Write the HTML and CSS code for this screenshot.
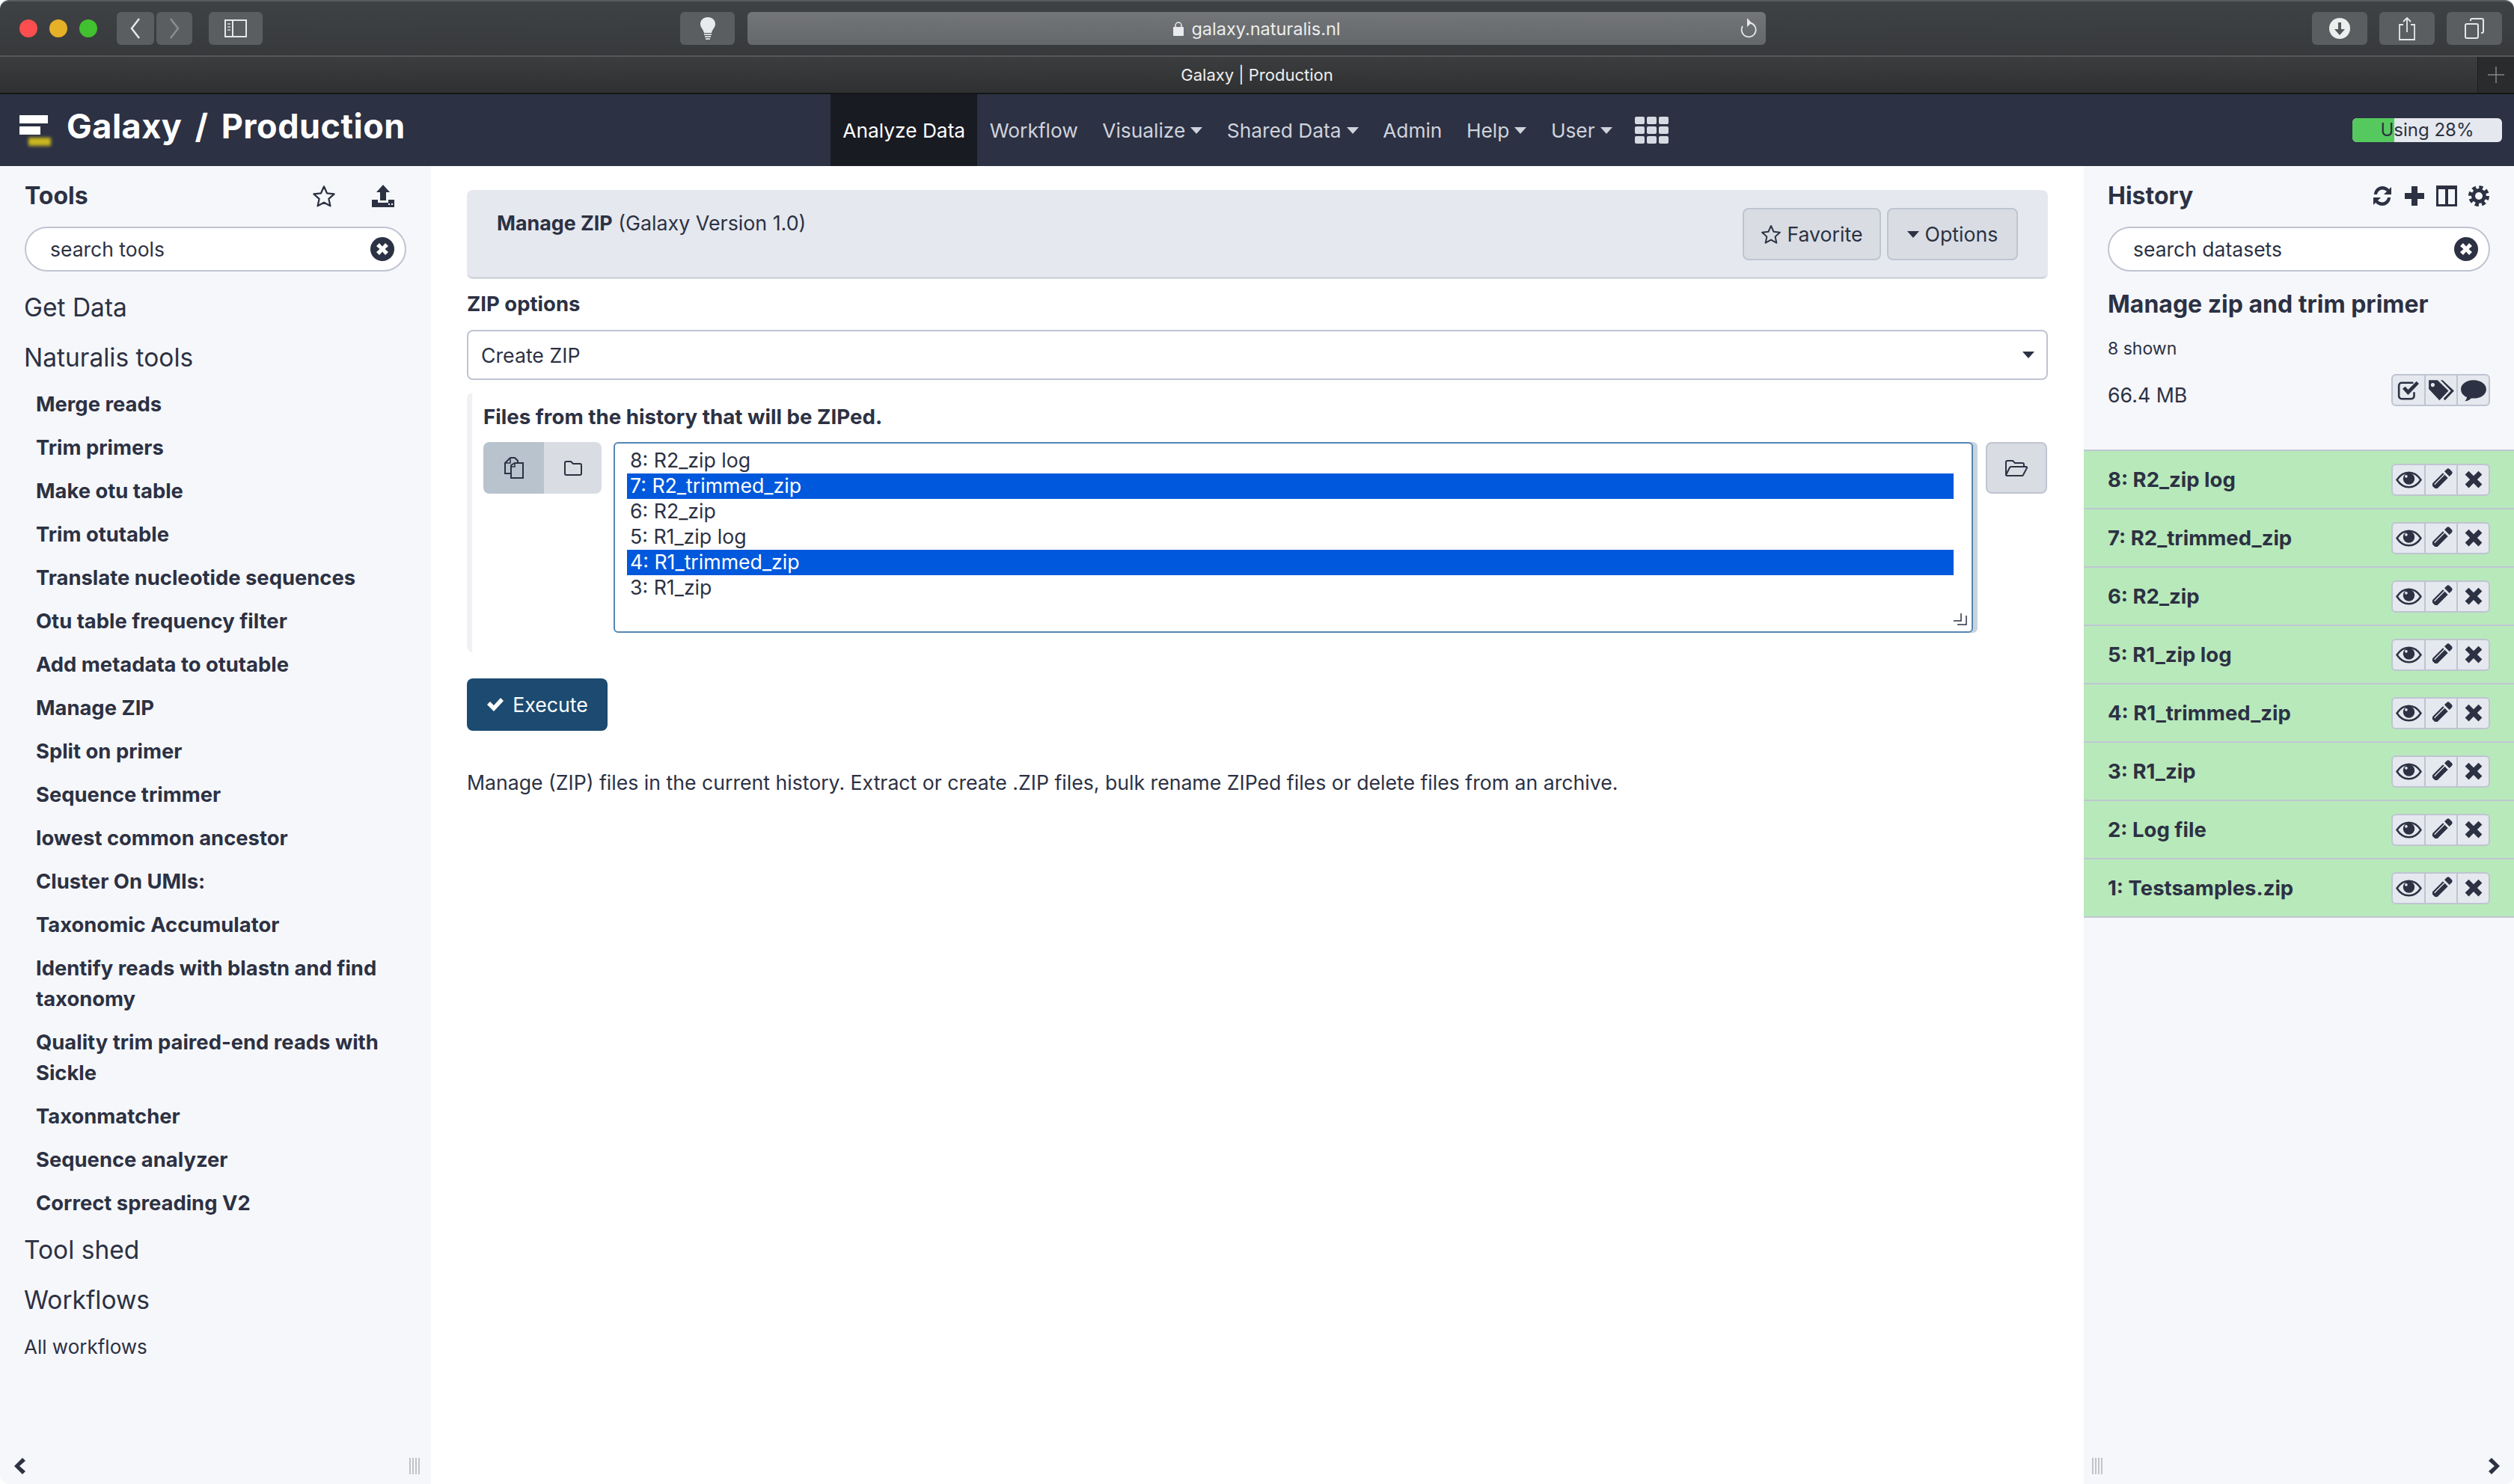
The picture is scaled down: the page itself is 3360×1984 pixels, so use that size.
FILE: index.html
```html
<!DOCTYPE html>
<html lang="en">
<head>
    <meta charset="UTF-8">
    <title>Galaxy | Production</title>
    <link rel="stylesheet" href="styles.css">
</head>
<body>
<svg class="sprite" xmlns="http://www.w3.org/2000/svg">
    <symbol id="i-eye" viewBox="0 0 34 24"><path d="M1.500 12C6 5 11 2.500 17 2.500S28 5 32.500 12C28 19 23 21.500 17 21.500S6 19 1.500 12z" fill="none" stroke="currentColor" stroke-width="2.400"/><circle cx="17" cy="10.500" r="7.500" fill="currentColor"/><circle cx="13.500" cy="7.500" r="1.800" fill="#e5e8ee"/></symbol>
    <symbol id="i-pencil" viewBox="0 0 24 24"><path d="M17.500 1.500a2 2 0 0 1 2.500 0l2.500 2.500a2 2 0 0 1 0 2.500L20 9l-5-5zM13.500 5.500l5 5L8 21H3v-5z" fill="currentColor"/><path d="M5 17l10-10" stroke="#e5e8ee" stroke-width="1"/><path d="M3 18.500L5.500 21H3z" fill="#e5e8ee"/></symbol>
    <symbol id="i-times" viewBox="0 0 24 24"><path d="M6 1.500l6 6 6-6 4.500 4.500-6 6 6 6-4.500 4.500-6-6-6 6L1.500 18l6-6-6-6z" fill="currentColor"/></symbol>
    <symbol id="i-check-square" viewBox="0 0 28 26"><path d="M21 15v5a3.500 3.500 0 0 1-3.500 3.500h-12A3.500 3.500 0 0 1 2 20V7a3.500 3.500 0 0 1 3.500-3.500H20" fill="none" stroke="currentColor" stroke-width="2.400"/><path d="M6.500 11l3.500-3 3.500 4L24 1.500l3 3L13.500 18.500z" fill="currentColor"/></symbol>
    <symbol id="i-tags" viewBox="0 0 36 28"><path d="M2 1h11l14 13.500-11.500 12L2 12zM7 4.500a2.500 2.500 0 1 0 .01 0z" fill="currentColor" fill-rule="evenodd"/><path d="M17 1h2.500L34 14.500 22.500 26.500l-2-2 9.500-10z" fill="currentColor"/></symbol>
    <symbol id="i-comment" viewBox="0 0 34 28"><path d="M17 1c9 0 16 5 16 11.500S26 24 17 24h-3c-2 2-5 3.500-8 3.500 1.500-1.500 2.500-3.500 2.500-5C4 20.500 1 17 1 12.500 1 6 8 1 17 1z" fill="currentColor"/></symbol>
    <symbol id="i-clear" viewBox="0 0 32 32"><circle cx="16" cy="16" r="16" fill="currentColor"/><path d="M12 8l4 4.500L20 8l4 4-4.500 4 4.500 4-4 4-4-4.500L12 24l-4-4 4.500-4L8 12z" fill="#fff"/></symbol>
    <symbol id="i-star" viewBox="0 0 24 24"><path d="M12 2.500l3 6.700 7.200.8-5.400 4.900 1.500 7.100L12 18.500l-6.300 3.500 1.500-7.100L1.800 10 9 9.200z" fill="none" stroke="currentColor" stroke-width="1.700" stroke-linejoin="round"/></symbol>
    <symbol id="i-caret" viewBox="0 0 16 9"><path d="M0 0h16L8 9z" fill="currentColor"/></symbol>
</svg>

<div class="window-bar">
    <div class="dots">
        <span class="dot dot-red"></span><span class="dot dot-yellow"></span><span class="dot dot-green"></span>
    </div>
    <div class="bar-btn bar-back">
        <svg width="20" height="32" viewBox="0 0 20 32"><path d="M15 3L5 16l10 13" fill="none" stroke="#e6e7e8" stroke-width="2.500"/></svg>
    </div>
    <div class="bar-btn bar-forward">
        <svg width="20" height="32" viewBox="0 0 20 32"><path d="M5 3l10 13L5 29" fill="none" stroke="#8b8d8f" stroke-width="2.500"/></svg>
    </div>
    <div class="bar-btn bar-sidebar">
        <svg width="30" height="24" viewBox="0 0 30 24"><rect x="1" y="1" width="28" height="22" fill="none" stroke="#e6e7e8" stroke-width="2"/><path d="M11 1v22" stroke="#e6e7e8" stroke-width="2"/><path d="M4 6h4M4 10h4M4 14h4" stroke="#b5b7b8" stroke-width="2"/></svg>
    </div>
    <div class="bar-btn bar-bulb">
        <svg width="24" height="32" viewBox="0 0 24 32"><path d="M12 1C6 1 2 5 2 10c0 5 4 7 5 12h10c1-5 5-7 5-12 0-5-4-9-10-9z" fill="#e8eaeb"/><path d="M7 24h10M8 27h8M9 30h6" stroke="#d2d4d5" stroke-width="2"/></svg>
    </div>
    <div class="url-bar">
        <svg class="lock" width="16" height="20" viewBox="0 0 16 20"><path d="M4 9V6a4 4 0 0 1 8 0v3" fill="none" stroke="#e8eaeb" stroke-width="1.500"/><rect x="1" y="8" width="14" height="12" rx="1" fill="#e8eaeb"/></svg>
        <span>galaxy.naturalis.nl</span>
        <svg class="reload" width="24" height="30" viewBox="0 0 24 30"><path d="M15 7.500A9.500 9.500 0 1 1 5 12" fill="none" stroke="#e6e7e8" stroke-width="1.800"/><path d="M11 1l6 6.500-6 5.500z" fill="#e6e7e8"/></svg>
    </div>
    <div class="bar-btn bar-download">
        <svg width="28" height="28" viewBox="0 0 28 28"><circle cx="14" cy="14" r="14" fill="#eceded"/><path d="M12 6h4v9h5l-7 8-7-8h5z" fill="#55585a"/></svg>
    </div>
    <div class="bar-btn bar-share">
        <svg width="24" height="32" viewBox="0 0 24 32"><path d="M7 11H2v20h20V11h-5" fill="none" stroke="#e6e7e8" stroke-width="1.800"/><path d="M12 21V2M7 7l5-5 5 5" fill="none" stroke="#e6e7e8" stroke-width="1.800"/></svg>
    </div>
    <div class="bar-btn bar-tabs">
        <svg width="26" height="28" viewBox="0 0 26 28"><rect x="1" y="8" width="17" height="19" rx="2" fill="none" stroke="#e6e7e8" stroke-width="2"/><path d="M8 4V3a2 2 0 0 1 2-2h13a2 2 0 0 1 2 2v15a2 2 0 0 1-2 2h-1" fill="none" stroke="#e6e7e8" stroke-width="2"/></svg>
    </div>
</div>

<div class="tab-bar">
    <div class="tab-title">Galaxy | Production</div>
    <div class="tab-new">
        <svg width="22" height="22" viewBox="0 0 22 22"><path d="M11 0v22M0 11h22" stroke="#85878a" stroke-width="1.500"/></svg>
    </div>
</div>

<header class="masthead">
    <div class="brand">
        <div class="logo">
            <span class="logo-bar logo-long"></span>
            <span class="logo-bar logo-short"></span>
            <span class="logo-bar logo-yellow"></span>
        </div>
        <span class="brand-text">Galaxy / Production</span>
    </div>
    <nav class="top-nav">
        <a class="nav-item active">Analyze Data</a>
        <a class="nav-item">Workflow</a>
        <a class="nav-item">Visualize<svg class="nav-caret"><use href="#i-caret"/></svg></a>
        <a class="nav-item">Shared Data<svg class="nav-caret"><use href="#i-caret"/></svg></a>
        <a class="nav-item">Admin</a>
        <a class="nav-item">Help<svg class="nav-caret"><use href="#i-caret"/></svg></a>
        <a class="nav-item">User<svg class="nav-caret"><use href="#i-caret"/></svg></a>
        <div class="nav-grid">
            <span></span><span></span><span></span><span></span><span></span><span></span><span></span><span></span><span></span>
        </div>
    </nav>
    <div class="quota">
        <div class="quota-fill"></div>
        <span class="quota-text">Using 28%</span>
    </div>
</header>

<div class="layout">
    <!-- Tools panel -->
    <aside class="panel panel-left">
        <div class="panel-head">
            <h2 class="panel-title">Tools</h2>
            <div class="panel-icons tools-icons">
                <svg class="head-icon star-icon"><use href="#i-star"/></svg>
                <svg class="head-icon" viewBox="0 0 30 30"><path d="M15 0l9 10h-5v11h-8V10H6zM0 20h8v4h14v-4h8v10H0z" fill="currentColor"/><path d="M22 26h2M26 26h2" stroke="#f6f7fa" stroke-width="2"/></svg>
            </div>
        </div>
        <div class="search-box">
            <span>search tools</span>
            <svg class="search-clear"><use href="#i-clear"/></svg>
        </div>
        <div class="tool-list">
            <div class="tool-section">Get Data</div>
            <div class="tool-section">Naturalis tools</div>
            <div class="tool-item">Merge reads</div>
            <div class="tool-item">Trim primers</div>
            <div class="tool-item">Make otu table</div>
            <div class="tool-item">Trim otutable</div>
            <div class="tool-item">Translate nucleotide sequences</div>
            <div class="tool-item">Otu table frequency filter</div>
            <div class="tool-item">Add metadata to otutable</div>
            <div class="tool-item">Manage ZIP</div>
            <div class="tool-item">Split on primer</div>
            <div class="tool-item">Sequence trimmer</div>
            <div class="tool-item">lowest common ancestor</div>
            <div class="tool-item">Cluster On UMIs:</div>
            <div class="tool-item">Taxonomic Accumulator</div>
            <div class="tool-item">Identify reads with blastn and find taxonomy</div>
            <div class="tool-item">Quality trim paired-end reads with Sickle</div>
            <div class="tool-item">Taxonmatcher</div>
            <div class="tool-item">Sequence analyzer</div>
            <div class="tool-item">Correct spreading V2</div>
            <div class="tool-section">Tool shed</div>
            <div class="tool-section">Workflows</div>
            <div class="tool-link">All workflows</div>
        </div>
        <div class="panel-foot foot-left">
            <svg class="foot-chevron" viewBox="0 0 18 24"><path d="M13 1l4 4-8 7 8 7-4 4L2 12z" fill="currentColor"/></svg>
            <div class="drag-handle"></div>
        </div>
    </aside>

    <!-- Tool form -->
    <main class="center">
        <div class="tool-header">
            <div class="tool-name"><b>Manage ZIP</b> (Galaxy Version 1.0)</div>
            <div class="tool-actions">
                <button class="btn btn-fav"><svg class="btn-star"><use href="#i-star"/></svg>Favorite</button>
                <button class="btn btn-options"><svg class="btn-caret"><use href="#i-caret"/></svg>Options</button>
            </div>
        </div>

        <label class="field-label">ZIP options</label>
        <div class="select-box">
            <span>Create ZIP</span>
            <svg class="select-caret"><use href="#i-caret"/></svg>
        </div>

        <section class="form-section">
            <label class="field-label section-label">Files from the history that will be ZIPed.</label>
            <div class="file-picker">
                <div class="toggle-group">
                    <div class="toggle toggle-on">
                        <svg width="28" height="30" viewBox="0 0 28 30"><path d="M9 1h6l4 4v4M9 1L2 8v14h8" fill="none" stroke="#2c3143" stroke-width="2"/><path d="M10 22V11l5-3h11v20H10z" fill="none" stroke="#2c3143" stroke-width="2"/><path d="M9 1v7H2M15 8v5h-5" fill="none" stroke="#2c3143" stroke-width="1.500"/></svg>
                    </div>
                    <div class="toggle">
                        <svg width="26" height="24" viewBox="0 0 26 24"><path d="M2 5a2 2 0 0 1 2-2h6l3 3h9a2 2 0 0 1 2 2v11a2 2 0 0 1-2 2H4a2 2 0 0 1-2-2z" fill="none" stroke="#2c3143" stroke-width="2"/></svg>
                    </div>
                </div>
                <div class="listbox">
                    <div class="list-option">8: R2_zip log</div>
                    <div class="list-option selected">7: R2_trimmed_zip</div>
                    <div class="list-option">6: R2_zip</div>
                    <div class="list-option">5: R1_zip log</div>
                    <div class="list-option selected">4: R1_trimmed_zip</div>
                    <div class="list-option">3: R1_zip</div>
                    <svg class="grip" width="18" height="16" viewBox="0 0 18 16"><path d="M0 10h10V0M5 15h12V3" fill="none" stroke="#2c3143" stroke-width="1.500"/></svg>
                </div>
                <div class="browse-btn">
                    <svg width="32" height="24" viewBox="0 0 32 24"><path d="M2 20V4a2 2 0 0 1 2-2h7l3 3h10a2 2 0 0 1 2 2v3M2 21l5-10a2 2 0 0 1 2-1h20a1 1 0 0 1 1 1.500L25 21a2 2 0 0 1-2 1H3z" fill="none" stroke="#2c3143" stroke-width="2"/></svg>
                </div>
            </div>
        </section>

        <button class="btn-execute">
            <svg width="24" height="20" viewBox="0 0 24 20"><path d="M1 10l4-4 5 5L19 1l4 4L10 19z" fill="#fff"/></svg>Execute
        </button>
        <p class="help-text">Manage (ZIP) files in the current history. Extract or create .ZIP files, bulk rename ZIPed files or delete files from an archive.</p>
    </main>

    <!-- History panel -->
    <aside class="panel panel-right">
        <div class="history-top">
            <div class="panel-head">
                <h2 class="panel-title">History</h2>
                <div class="panel-icons history-icons">
                    <svg class="head-icon" viewBox="0 0 28 30"><path d="M3 13C3 7 8 2 14 2c4 0 7 2 9 4l3-3v10H16l4-4c-1.500-1.500-3.500-2.500-6-2.500-3.500 0-6.500 3-7 6.500zM25 17c0 6-5 11-11 11-4 0-7-2-9-4l-3 3V17h10l-4 4c1.500 1.500 3.500 2.500 6 2.500 3.500 0 6.500-3 7-6.500z" fill="currentColor"/></svg>
                    <svg class="head-icon" viewBox="0 0 28 30"><path d="M10 2h8v9h9v8h-9v9h-8v-9H1v-8h9z" fill="currentColor"/></svg>
                    <svg class="head-icon" viewBox="0 0 30 30"><path d="M1 1h28v28H1zM4 6v20h9V6zM17 6v20h9V6z" fill="currentColor" fill-rule="evenodd"/></svg>
                    <svg class="head-icon" viewBox="0 0 28 30"><circle cx="14" cy="15" r="7.500" fill="none" stroke="currentColor" stroke-width="5"/><circle cx="14" cy="15" r="11.500" fill="none" stroke="currentColor" stroke-width="5" stroke-dasharray="5 4.030"/></svg>
                </div>
            </div>
            <div class="search-box">
                <span>search datasets</span>
                <svg class="search-clear"><use href="#i-clear"/></svg>
            </div>
            <h3 class="history-name">Manage zip and trim primer</h3>
            <div class="history-count">8 shown</div>
            <div class="history-size">
                <span>66.4 MB</span>
                <div class="icon-group">
                    <div class="icon-cell"><svg class="ic-check"><use href="#i-check-square"/></svg></div>
                    <div class="icon-cell"><svg class="ic-tags"><use href="#i-tags"/></svg></div>
                    <div class="icon-cell"><svg class="ic-comment"><use href="#i-comment"/></svg></div>
                </div>
            </div>
        </div>
        <div class="dataset-list">
            <div class="dataset">
                <span>8: R2_zip log</span>
                <div class="icon-group">
                    <div class="icon-cell"><svg class="ic-eye"><use href="#i-eye"/></svg></div>
                    <div class="icon-cell"><svg class="ic-pencil"><use href="#i-pencil"/></svg></div>
                    <div class="icon-cell"><svg class="ic-times"><use href="#i-times"/></svg></div>
                </div>
            </div>
            <div class="dataset">
                <span>7: R2_trimmed_zip</span>
                <div class="icon-group">
                    <div class="icon-cell"><svg class="ic-eye"><use href="#i-eye"/></svg></div>
                    <div class="icon-cell"><svg class="ic-pencil"><use href="#i-pencil"/></svg></div>
                    <div class="icon-cell"><svg class="ic-times"><use href="#i-times"/></svg></div>
                </div>
            </div>
            <div class="dataset">
                <span>6: R2_zip</span>
                <div class="icon-group">
                    <div class="icon-cell"><svg class="ic-eye"><use href="#i-eye"/></svg></div>
                    <div class="icon-cell"><svg class="ic-pencil"><use href="#i-pencil"/></svg></div>
                    <div class="icon-cell"><svg class="ic-times"><use href="#i-times"/></svg></div>
                </div>
            </div>
            <div class="dataset">
                <span>5: R1_zip log</span>
                <div class="icon-group">
                    <div class="icon-cell"><svg class="ic-eye"><use href="#i-eye"/></svg></div>
                    <div class="icon-cell"><svg class="ic-pencil"><use href="#i-pencil"/></svg></div>
                    <div class="icon-cell"><svg class="ic-times"><use href="#i-times"/></svg></div>
                </div>
            </div>
            <div class="dataset">
                <span>4: R1_trimmed_zip</span>
                <div class="icon-group">
                    <div class="icon-cell"><svg class="ic-eye"><use href="#i-eye"/></svg></div>
                    <div class="icon-cell"><svg class="ic-pencil"><use href="#i-pencil"/></svg></div>
                    <div class="icon-cell"><svg class="ic-times"><use href="#i-times"/></svg></div>
                </div>
            </div>
            <div class="dataset">
                <span>3: R1_zip</span>
                <div class="icon-group">
                    <div class="icon-cell"><svg class="ic-eye"><use href="#i-eye"/></svg></div>
                    <div class="icon-cell"><svg class="ic-pencil"><use href="#i-pencil"/></svg></div>
                    <div class="icon-cell"><svg class="ic-times"><use href="#i-times"/></svg></div>
                </div>
            </div>
            <div class="dataset">
                <span>2: Log file</span>
                <div class="icon-group">
                    <div class="icon-cell"><svg class="ic-eye"><use href="#i-eye"/></svg></div>
                    <div class="icon-cell"><svg class="ic-pencil"><use href="#i-pencil"/></svg></div>
                    <div class="icon-cell"><svg class="ic-times"><use href="#i-times"/></svg></div>
                </div>
            </div>
            <div class="dataset">
                <span>1: Testsamples.zip</span>
                <div class="icon-group">
                    <div class="icon-cell"><svg class="ic-eye"><use href="#i-eye"/></svg></div>
                    <div class="icon-cell"><svg class="ic-pencil"><use href="#i-pencil"/></svg></div>
                    <div class="icon-cell"><svg class="ic-times"><use href="#i-times"/></svg></div>
                </div>
            </div>
        </div>
        <div class="panel-foot foot-right">
            <div class="drag-handle"></div>
            <svg class="foot-chevron" viewBox="0 0 18 24"><path d="M5 1L1 5l8 7-8 7 4 4 11-11z" fill="currentColor"/></svg>
        </div>
    </aside>
</div>
</body>
</html>
```

FILE: styles.css
```css
* { box-sizing: border-box; }
html, body { height: 100%; }
body { margin: 0; display: flex; flex-direction: column; height: 1984px; overflow: hidden; background: #fff; color: #2c3143; font-family: Inter, "Liberation Sans", sans-serif; font-size: 26px; }
h2, h3, p { margin: 0; }
.sprite { display: none; }

/* browser chrome */
.window-bar { display: flex; align-items: center; flex: 0 0 76px; padding: 0 16px 0 26px; background: linear-gradient(#3f4245, #37393b); border-top: 2px solid #5a5c5f; border-bottom: 2px solid #55575a; border-radius: 12px 12px 0 0; }
.dots { display: flex; gap: 16px; margin-right: 26px; }
.dot { width: 24px; height: 24px; border-radius: 50%; }
.dot-red { background: #fc4e4e; }
.dot-yellow { background: #e6b126; }
.dot-green { background: #41c12f; }
.bar-btn { display: flex; align-items: center; justify-content: center; height: 44px; background: #5b5e60; border-radius: 6px; }
.bar-back { width: 50px; margin-right: 3px; }
.bar-forward { width: 48px; margin-right: 22px; }
.bar-sidebar { width: 72px; margin-right: 558px; }
.bar-bulb { width: 73px; margin-right: 17px; }
.bar-download, .bar-share, .bar-tabs { width: 74px; }
.bar-share { margin: 0 16px; }
.url-bar { display: flex; align-items: center; justify-content: center; position: relative; gap: 9px; width: 1361px; height: 44px; margin-right: 730px; background: linear-gradient(#737578, #65686a); border-radius: 6px; color: #eceded; font-size: 23.500px; }
.reload { position: absolute; right: 12px; top: 7px; }
.tab-bar { display: flex; align-items: center; flex: 0 0 50px; background: linear-gradient(#3b3d3f, #2f3031); border-bottom: 2px solid #141516; }
.tab-title { flex: 1; text-align: center; padding-left: 49px; color: #eee; font-size: 22px; }
.tab-new { display: flex; align-items: center; justify-content: center; width: 49px; height: 48px; background: #2a2b2c; border-left: 1px solid #1b1c1d; }

/* masthead */
.masthead { display: flex; align-items: center; flex: 0 0 96px; background: #2c3143; }
.brand { display: flex; align-items: center; width: 1110px; padding-left: 26px; }
.logo { display: flex; flex-direction: column; width: 63px; height: 41px; margin-top: 1px; }
.logo-bar { display: block; height: 11px; margin-bottom: 4px; background: #fff; }
.logo-long { width: 38px; }
.logo-short { width: 28px; }
.logo-yellow { width: 30px; margin: 0 0 0 12px; background: #c9b71f; filter: blur(2px); }
.brand-text { color: #fff; font-size: 45px; font-weight: 700; letter-spacing: .5px; word-spacing: 6px; margin-bottom: 12px; }
.top-nav { display: flex; align-items: stretch; height: 96px; }
.nav-item { display: flex; align-items: center; padding: 0 16.300px; color: #cfd3dc; font-size: 26.300px; }
.nav-item.active { background: #191b22; color: #fff; }
.nav-caret { width: 16px; height: 9px; margin-left: 7px; }
.nav-grid { display: grid; grid-template-columns: repeat(3, 13px); grid-auto-rows: 10px; gap: 3px; align-self: center; margin-left: 14px; }
.nav-grid span { background: #d6dae2; border-radius: 2px; }
.quota { position: relative; width: 200px; height: 32px; margin-left: auto; margin-right: 16px; background: #e5e8ee; border-radius: 6px; overflow: hidden; }
.quota-fill { width: 28%; height: 100%; background: #55c95e; }
.quota-text { position: absolute; left: 0; right: 0; top: 0; text-align: center; font-size: 24px; line-height: 32px; color: #2c3143; }

/* panels */
.layout { display: flex; flex: 1; min-height: 0; }
.panel { display: flex; flex-direction: column; background: #f6f7fa; }
.panel-left { width: 576px; padding: 23px 33px 0 33px; border-bottom-left-radius: 12px; }
.panel-right { width: 575px; margin-left: auto; border-bottom-right-radius: 12px; }
.panel-head { display: flex; align-items: center; justify-content: space-between; height: 34px; }
.panel-title { font-size: 32px; font-weight: 700; line-height: 34px; }
.panel-icons { display: flex; align-items: center; }
.head-icon { width: 30px; height: 30px; color: #2c3143; }
.star-icon { width: 32px; height: 32px; }
.tools-icons { gap: 48px; margin-right: 16px; }
.history-icons { gap: 13px; }
.search-box { display: flex; align-items: center; justify-content: space-between; height: 60px; margin-top: 24px; padding: 0 14px 0 32px; background: #fff; border: 2px solid #bfc4d1; border-radius: 30px; font-size: 26.500px; }
.search-clear { width: 32px; height: 32px; color: #2c3143; }

.tool-list { margin: 15px -33px 0 -1px; }
.tool-section { height: 67px; font-size: 33.500px; line-height: 67px; }
.tool-item { width: 500px; padding: 7.500px 0 9.500px 16px; font-size: 27.400px; font-weight: 700; line-height: 41px; }
.tool-link { font-size: 26px; line-height: 58px; }
.panel-foot { display: flex; align-items: center; justify-content: space-between; flex: 0 0 48px; margin-top: auto; }
.foot-left { margin: auto -20px 0 -16px; }
.foot-right { padding: 0 17px 0 11px; }
.foot-chevron { width: 18px; height: 24px; color: #2c3143; }
.drag-handle { width: 16px; height: 22px; background: repeating-linear-gradient(90deg, #c2c3c6 0 2px, transparent 2px 4px); }

/* center form */
.center { flex: 1; padding: 32px 48px 0; min-width: 0; }
.tool-header { display: flex; justify-content: space-between; height: 119px; padding: 24px 40px 0 40px; background: #e5e8ee; border-bottom: 3px solid #d3d6dd; border-radius: 8px; }
.tool-name { font-size: 26.800px; line-height: 40px; }
.tool-name b { font-weight: 700; }
.tool-actions { display: flex; gap: 8px; }
.btn { display: flex; align-items: center; justify-content: center; height: 70px; background: #d9dde3; border: 2px solid #bfc4d1; border-radius: 8px; color: #2c3143; font: inherit; font-size: 26.700px; padding: 0; }
.btn-fav { width: 185px; }
.btn-options { width: 175px; }
.btn-star { width: 28px; height: 28px; margin-right: 7px; }
.btn-caret { width: 16px; height: 9px; margin-right: 8px; }
.field-label { display: block; margin-top: 17px; font-size: 27.500px; font-weight: 700; line-height: 32px; }
.select-box { display: flex; align-items: center; justify-content: space-between; height: 67px; margin-top: 19px; padding: 0 16px 0 17px; border: 2px solid #bfc4d1; border-radius: 8px; font-size: 26.700px; }
.select-caret { width: 16px; height: 9px; }
.form-section { height: 347px; margin-top: 17px; padding: 15px 0 26px 15px; border-left: 7px solid #f0f1f4; border-radius: 8px; }
.section-label { margin-top: 0; font-size: 27.700px; line-height: 34px; }
.file-picker { display: flex; align-items: flex-start; margin-top: 17px; }
.toggle-group { display: flex; width: 158px; height: 69px; margin-right: 16px; }
.toggle { display: flex; align-items: center; justify-content: center; flex: 1; background: #d9dde3; }
.toggle:first-child { flex: 0 0 81px; border-radius: 8px 0 0 8px; }
.toggle:last-child { border-radius: 0 8px 8px 0; }
.toggle-on { background: #b8c3ce; }
.listbox { position: relative; width: 1817px; height: 255px; padding: 6px 24px 0 16px; background: #fff; border: 2px solid #5487b3; border-radius: 6px; box-shadow: 6px 0 0 #c9d3dd; font-size: 26.700px; }
.list-option { height: 34px; line-height: 33px; padding-left: 4px; color: #2c3143; }
.list-option.selected { background: #0058dc; color: #fff; }
.grip { position: absolute; right: 6px; bottom: 8px; }
.browse-btn { display: flex; align-items: center; justify-content: center; width: 82px; height: 69px; margin-left: 17px; background: #d9dde3; border: 2px solid #bfc4d1; border-radius: 8px; }
.btn-execute { display: flex; align-items: center; justify-content: center; gap: 11px; width: 188px; height: 70px; margin-top: 35px; background: #1c4a70; border: 0; border-radius: 8px; color: #fff; font: inherit; font-size: 26.700px; }
.help-text { margin-top: 52px; font-size: 26.650px; line-height: 34px; }

/* history */
.history-top { padding: 23px 32px 0 32px; }
.history-name { margin-top: 22px; font-size: 32px; font-weight: 700; line-height: 44px; }
.history-count { margin-top: 22px; font-size: 23px; line-height: 30px; }
.history-size { display: flex; justify-content: space-between; align-items: flex-start; height: 56px; margin-top: 19px; font-size: 26.700px; line-height: 56px; }
.icon-group { display: flex; height: 43px; background: #e5e8ee; border: 2px solid #bfc4d1; border-radius: 6px; }
.icon-cell { display: flex; align-items: center; justify-content: center; width: 43px; border-left: 2px solid #bfc4d1; }
.icon-cell:first-child { border-left: 0; width: 42px; }
.ic-check { width: 30px; height: 28px; }
.ic-tags { width: 38px; height: 30px; }
.ic-comment { width: 36px; height: 30px; }
.ic-eye { width: 35px; height: 25px; }
.ic-pencil { width: 32px; height: 32px; }
.ic-times { width: 26px; height: 26px; }
.dataset-list { margin-top: 45px; border-top: 2px solid #bfc6d3; }
.dataset { display: flex; align-items: center; justify-content: space-between; height: 78px; padding: 0 32px; background: #b8e9bb; border-bottom: 2px solid #bfc6d3; font-size: 27.500px; font-weight: 700; }
```
